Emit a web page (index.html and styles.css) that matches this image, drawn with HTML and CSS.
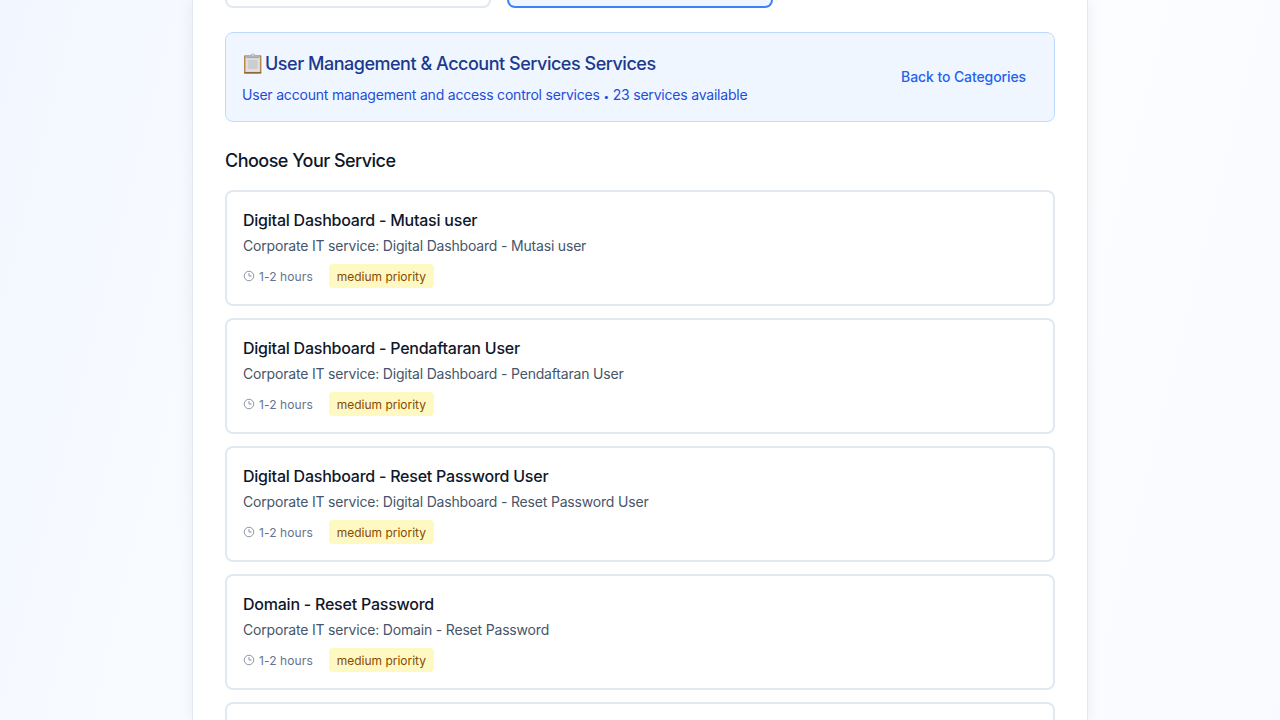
FILE: index.html
```html
<!DOCTYPE html>
<html lang="en">
<head>
<meta charset="utf-8">
<title>Choose Your Service</title>
<link rel="stylesheet" href="styles.css">
</head>
<body>
<svg class="defs" width="0" height="0" aria-hidden="true">
  <symbol id="clock" viewBox="0 0 12 12">
    <circle cx="6" cy="6" r="4.75" fill="none" stroke="currentColor" stroke-width=".75"/>
    <path d="M6 3v3h2.6" fill="none" stroke="currentColor" stroke-width=".75"/>
  </symbol>
</svg>
<main class="panel">
  <div class="categories">
    <div class="category"></div>
    <div class="category category-selected"></div>
  </div>
  <section class="banner">
    <div>
      <h3 class="banner-title">
        <svg class="clipboard" viewBox="0 0 23 28" aria-hidden="true">
          <rect x="2" y="6.3" width="17.4" height="18.3" rx="1" fill="#b88745"/>
          <path d="M2 23.2h17.4v.6q0 .8-1 .8h-15.4q-1 0-1-.8z" fill="#886030"/>
          <rect x="3.5" y="7.6" width="14.4" height="15.3" fill="#e0e1e3"/>
          <rect x="5.7" y="10.8" width="10" height="9.3" fill="#cdcdd0"/>
          <path d="M4 8.8V7.1q0-.8 1-.8h3.5q.5-1.8 2.4-1.8t2.4 1.8h3q1 0 1 .8v1.7z" fill="#b1b4b9"/>
          <path d="M4.6 8.7h12.4" stroke="#8d8f93" stroke-width=".6"/>
          <circle cx="10.9" cy="6" r=".7" fill="#e9f0f7"/>
        </svg><span class="banner-label">User Management &amp; Account Services Services</span>
      </h3>
      <p class="banner-text">User account management and access control services <span class="dot">•</span> 23 services available</p>
    </div>
    <button class="back">Back to Categories</button>
  </section>
  <h3 class="heading">Choose Your Service</h3>
  <div class="services">
    <article class="service">
      <h4 class="name">Digital Dashboard - Mutasi user</h4>
      <p class="description">Corporate IT service: Digital Dashboard - Mutasi user</p>
      <div class="meta"><span class="time"><svg class="clock"><use href="#clock"/></svg><span class="duration">1-2 hours</span></span><span class="priority">medium priority</span></div>
    </article>
    <article class="service">
      <h4 class="name">Digital Dashboard - Pendaftaran User</h4>
      <p class="description">Corporate IT service: Digital Dashboard - Pendaftaran User</p>
      <div class="meta"><span class="time"><svg class="clock"><use href="#clock"/></svg><span class="duration">1-2 hours</span></span><span class="priority">medium priority</span></div>
    </article>
    <article class="service">
      <h4 class="name">Digital Dashboard - Reset Password User</h4>
      <p class="description">Corporate IT service: Digital Dashboard - Reset Password User</p>
      <div class="meta"><span class="time"><svg class="clock"><use href="#clock"/></svg><span class="duration">1-2 hours</span></span><span class="priority">medium priority</span></div>
    </article>
    <article class="service">
      <h4 class="name">Domain - Reset Password</h4>
      <p class="description">Corporate IT service: Domain - Reset Password</p>
      <div class="meta"><span class="time"><svg class="clock"><use href="#clock"/></svg><span class="duration">1-2 hours</span></span><span class="priority">medium priority</span></div>
    </article>
    <article class="service"></article>
  </div>
</main>
</body>
</html>
```
FILE: styles.css
```css
* { box-sizing: border-box; margin: 0; }
body {
  height: 720px;
  overflow: hidden;
  font-family: Inter, "Liberation Sans", sans-serif;
  background: linear-gradient(104deg, #f2f7ff 0%, #f8fbff 22%, #fcfdff 78%, #f8faff 100%);
}
.defs { position: absolute; }
.panel {
  width: 896px;
  height: 720px;
  margin: 0 auto;
  padding: 0 32px;
  overflow: hidden;
  background: #fff;
  border: solid #e2e8f0;
  border-width: 0 1px;
  box-shadow: 0 0 15px rgba(0, 0, 0, .07);
}
.categories {
  display: grid;
  grid-template-columns: repeat(3, 1fr);
  gap: 16px;
  margin-bottom: 24px;
}
.category {
  height: 8px;
  border: 2px solid #e2e8f0;
  border-top: 0;
  border-radius: 0 0 8px 8px;
}
.category-selected { border-color: #3b82f6; background: #eff6ff; }
.banner {
  display: flex;
  align-items: center;
  justify-content: space-between;
  height: 90px;
  padding: 16px;
  border: 1px solid #bedbff;
  border-radius: 8px;
  background: #eff6ff;
}
.banner-title {
  display: flex;
  margin-bottom: 8px;
  font-size: 18px;
  line-height: 28px;
  font-weight: 500;
  letter-spacing: -.48px;
  color: #1c398e;
}
.banner-label { height: 28px; padding-top: 1px; }
.clipboard { width: 23px; height: 28px; }
.banner-text {
  font-size: 14px;
  line-height: 20px;
  letter-spacing: -.2px;
  color: #1d4ed8;
}
.dot { font-size: 10px; line-height: 1; }
.back {
  padding: 8px 12px;
  border: 0;
  background: none;
  font: 500 14px/20px Inter, "Liberation Sans", sans-serif;
  letter-spacing: -.1px;
  color: #2563eb;
}
.heading {
  height: 28px;
  margin: 24px 0 16px;
  padding-top: 1px;
  font-size: 18px;
  line-height: 28px;
  font-weight: 500;
  letter-spacing: -.53px;
  color: #0f172a;
}
.services { display: flex; flex-direction: column; gap: 12px; }
.service {
  flex: none;
  height: 116px;
  padding: 16px;
  border: 2px solid #e2e8f0;
  border-radius: 8px;
}
.name {
  font-size: 16px;
  line-height: 24px;
  font-weight: 500;
  letter-spacing: -.23px;
  color: #0f172a;
}
.description {
  margin-top: 4px;
  font-size: 14px;
  line-height: 20px;
  letter-spacing: -.185px;
  color: #475569;
}
.meta {
  display: flex;
  align-items: center;
  gap: 16px;
  margin-top: 8px;
  font-size: 12px;
  line-height: 16px;
}
.time { display: flex; align-items: center; gap: 4px; color: #64748b; }
.duration { height: 16px; padding-top: 1px; letter-spacing: .1px; }
.clock { width: 12px; height: 12px; }
.priority {
  padding: 5px 8px 3px;
  border-radius: 4px;
  background: #fef9c2;
  color: #894b00;
  letter-spacing: -.02px;
}
```
